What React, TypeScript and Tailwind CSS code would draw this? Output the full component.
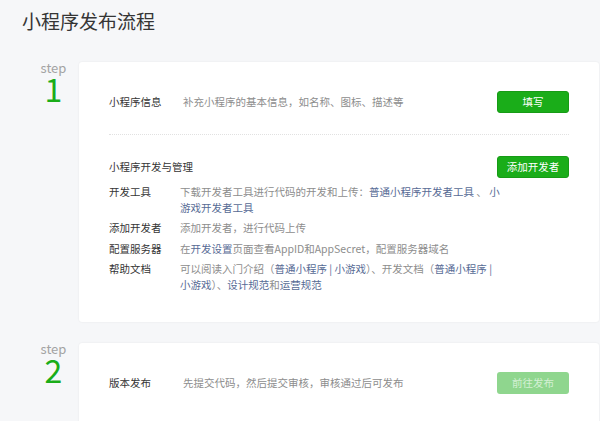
import React from "react";

const L = ({ children }: { children: React.ReactNode }) => (
  <span className="text-[#576b95]">{children}</span>
);

function Btn({ children, disabled }: { children: React.ReactNode; disabled?: boolean }) {
  return (
    <div
      className={
        "ml-auto flex h-[22px] w-[72px] shrink-0 items-center justify-center rounded-[3px] text-[10.5px] " +
        (disabled
          ? "bg-[#8fd68e] text-[#d3f0d3]"
          : "border border-[#179b16] bg-[#1aad19] text-white")
      }
    >
      {children}
    </div>
  );
}

function Step({ n }: { n: string }) {
  return (
    <div className="flex w-[57px] shrink-0 flex-col items-center pl-[6px]">
      <div className="text-[13px] leading-[12px] text-[#a3a3a3]">step</div>
      <div className="text-[32px] leading-[28px] text-[#1aad19]">{n}</div>
    </div>
  );
}

function Row({ label, children }: { label: string; children: React.ReactNode }) {
  return (
    <div className="flex leading-[16px]">
      <div className="w-[71px] shrink-0 text-[#353535]">{label}</div>
      <div className="whitespace-nowrap text-[#8d8d8d]">{children}</div>
    </div>
  );
}

export default function App() {
  return (
    <div
      className="h-[421px] w-[600px] overflow-hidden bg-[#f6f7f9] pl-[22px]"
      style={{ fontFamily: '"Noto Sans CJK SC", "Noto Sans", sans-serif' }}
    >
      <div className="pt-[8px] text-[19px] leading-[26px] text-[#353535]">小程序发布流程</div>

      <div className="mt-[28px] flex">
        <Step n="1" />
        <div className="mr-[1px] flex-1 rounded-[3px] bg-white px-[30px] py-[29px] text-[10.5px] shadow-[0_0_2px_rgba(0,0,0,0.08)]">
          <div className="flex h-[22px] items-center">
            <div className="w-[74px] text-[#353535]">小程序信息</div>
            <div className="text-[#8d8d8d]">补充小程序的基本信息，如名称、图标、描述等</div>
            <Btn>填写</Btn>
          </div>
          <div className="my-[21px] border-t border-dotted border-[#e1e1e1]" />
          <div className="flex h-[22px] items-center">
            <div className="text-[#353535]">小程序开发与管理</div>
            <Btn>添加开发者</Btn>
          </div>
          <div className="mt-[5.5px] flex flex-col gap-[4.5px]">
            <Row label="开发工具">
              下载开发者工具进行代码的开发和上传：<L>普通小程序开发者工具</L> 、 <L>小</L>
              <br />
              <L>游戏开发者工具</L>
            </Row>
            <Row label="添加开发者">添加开发者，进行代码上传</Row>
            <Row label="配置服务器">
              在<L>开发设置</L>页面查看AppID和AppSecret，配置服务器域名
            </Row>
            <Row label="帮助文档">
              可以阅读入门介绍（<L>普通小程序 | 小游戏</L>）、开发文档（<L>普通小程序 |</L>
              <br />
              <L>小游戏</L>）、<L>设计规范</L>和<L>运营规范</L>
            </Row>
          </div>
        </div>
      </div>

      <div className="mt-[21px] flex">
        <Step n="2" />
        <div className="mr-[1px] h-[120px] flex-1 rounded-[3px] bg-white px-[30px] py-[29px] text-[10.5px] shadow-[0_0_2px_rgba(0,0,0,0.08)]">
          <div className="flex h-[22px] items-center">
            <div className="w-[74px] text-[#353535]">版本发布</div>
            <div className="text-[#8d8d8d]">先提交代码，然后提交审核，审核通过后可发布</div>
            <Btn disabled>前往发布</Btn>
          </div>
        </div>
      </div>
    </div>
  );
}
